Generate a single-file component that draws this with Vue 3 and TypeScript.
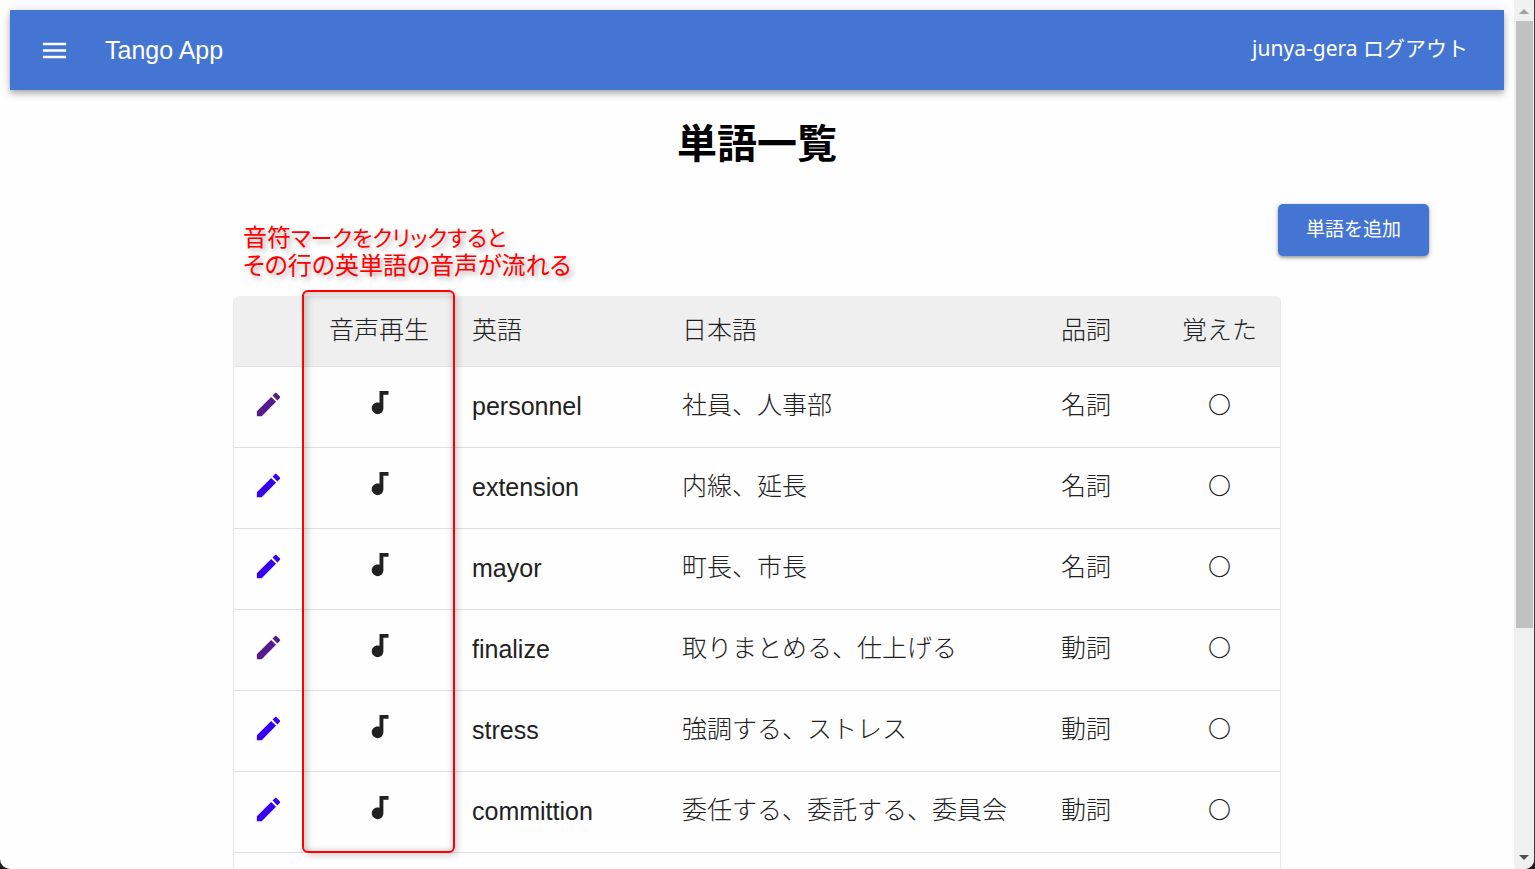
<script setup lang="ts">
interface Word {
  english: string
  japanese: string
  part: string
  learned: string
  visited: boolean
}

const words: Word[] = [
  { english: 'personnel', japanese: '社員、人事部', part: '名詞', learned: '〇', visited: true },
  { english: 'extension', japanese: '内線、延長', part: '名詞', learned: '〇', visited: false },
  { english: 'mayor', japanese: '町長、市長', part: '名詞', learned: '〇', visited: false },
  { english: 'finalize', japanese: '取りまとめる、仕上げる', part: '動詞', learned: '〇', visited: true },
  { english: 'stress', japanese: '強調する、ストレス', part: '動詞', learned: '〇', visited: false },
  { english: 'committion', japanese: '委任する、委託する、委員会', part: '動詞', learned: '〇', visited: false },
]
</script>

<template>
  <div class="window">
    <div class="page">
      <header class="app-bar">
        <button class="icon-button menu" type="button" aria-label="メニュー">
          <svg class="icon" viewBox="0 0 24 24"><path d="M3 18h18v-2H3v2zm0-5h18v-2H3v2zm0-7v2h18V6H3z" /></svg>
        </button>
        <span class="brand">Tango App</span>
        <a class="account" href="#logout">junya-gera ログアウト</a>
      </header>

      <main>
        <h1>単語一覧</h1>
        <div class="actions">
          <button class="add" type="button">単語を追加</button>
        </div>

        <div class="table-area">
          <p class="note">音符<span class="kana">マークをクリックすると</span><br />その行の英単語の音声が流れる</p>
          <table>
            <colgroup>
              <col class="c-edit" />
              <col class="c-sound" />
              <col class="c-english" />
              <col class="c-japanese" />
              <col class="c-part" />
              <col class="c-learned" />
            </colgroup>
            <thead>
              <tr>
                <th></th>
                <th class="center">音声再生</th>
                <th>英語</th>
                <th>日本語</th>
                <th>品詞</th>
                <th class="center">覚えた</th>
              </tr>
            </thead>
            <tbody>
              <tr v-for="word in words" :key="word.english">
                <td class="edit-cell">
                  <a class="icon-button edit" :class="{ visited: word.visited }" href="#edit" aria-label="編集">
                    <svg class="icon" viewBox="0 0 24 24"><path d="M3 17.25V21h3.75L17.81 9.94l-3.75-3.75L3 17.25zM20.71 7.04c.39-.39.39-1.02 0-1.41l-2.34-2.34c-.39-.39-1.02-.39-1.41 0l-1.83 1.83 3.75 3.75 1.83-1.83z" /></svg>
                  </a>
                </td>
                <td class="center sound-cell">
                  <button class="icon-button play" type="button" aria-label="再生">
                    <svg class="icon" viewBox="0 0 24 24"><path d="M12 3v9.28c-.47-.17-.97-.28-1.5-.28C8.01 12 6 14.01 6 16.5S8.01 21 10.5 21c2.31 0 4.2-1.75 4.45-4H15V6h4V3h-7z" /></svg>
                  </button>
                </td>
                <td class="english">{{ word.english }}</td>
                <td>{{ word.japanese }}</td>
                <td>{{ word.part }}</td>
                <td class="center learned">{{ word.learned }}</td>
              </tr>
              <tr><td colspan="6"></td></tr>
            </tbody>
          </table>
          <div class="highlight"></div>
        </div>
      </main>
    </div>

    <div class="scrollbar" aria-hidden="true">
      <svg class="arrow up" viewBox="0 0 10 5"><path d="M0 5L5 0l5 5z" /></svg>
      <div class="track"><div class="thumb"></div></div>
      <svg class="arrow" viewBox="0 0 10 5"><path d="M0 0h10L5 5z" /></svg>
    </div>
  </div>
</template>

<style>
body {
  margin: 0;
  background: #1a1a1a;
}
</style>

<style scoped>
.window {
  display: flex;
  box-sizing: border-box;
  height: 100vh;
  overflow: hidden;
  border-right: 1px solid #38383a;
  border-radius: 0 0 10px 10px;
  background: #fefefe;
  color: #212121;
  font-family: "Liberation Sans", "Noto Sans CJK JP", sans-serif;
}

.page {
  flex: 1;
  min-width: 0;
  padding: 10px;
}

.app-bar {
  display: flex;
  align-items: center;
  height: 80px;
  box-sizing: border-box;
  padding: 0 36px 0 29px;
  background: #4575d3;
  color: #fff;
  box-shadow: 0 2px 5px -1px rgba(0, 0, 0, 0.2), 0 5px 6px rgba(0, 0, 0, 0.14), 0 1px 12px rgba(0, 0, 0, 0.12);
}

.icon-button {
  display: inline-flex;
  padding: 0;
  border: 0;
  background: none;
  color: inherit;
  cursor: pointer;
}

.icon {
  display: block;
  width: 31px;
  height: 31px;
  fill: currentColor;
}

.brand {
  margin-left: 35px;
  font-size: 25px;
}

.account {
  margin-left: auto;
  padding-bottom: 6px;
  color: inherit;
  font-family: "Noto Sans", "Noto Sans CJK JP", sans-serif;
  font-size: 21px;
  text-decoration: none;
}

h1 {
  margin: 24px 0 0;
  color: #000;
  font-size: 40px;
  line-height: 60px;
  text-align: center;
}

.actions {
  display: flex;
  justify-content: flex-end;
  padding: 30px 75px 0 0;
}

.add {
  width: 151px;
  height: 52px;
  padding: 0 0 6px;
  border: 0;
  border-radius: 5px;
  background: #4575d3;
  color: #fff;
  font-family: "Noto Sans CJK JP", sans-serif;
  font-size: 19px;
  box-shadow: 0 2px 3px rgba(0, 0, 0, 0.3), 0 1px 6px rgba(0, 0, 0, 0.16);
}

.table-area {
  position: relative;
  max-width: 1048px;
  margin: 40px auto 0;
}

table {
  width: 100%;
  box-sizing: border-box;
  table-layout: fixed;
  border: 1px solid #e8e8e8;
  border-top: 0;
  border-radius: 6px;
  border-spacing: 0;
  overflow: hidden;
  font-size: 25px;
}

.c-edit { width: 72px; }
.c-sound { width: 146px; }
.c-english { width: 210px; }
.c-japanese { width: 379px; }
.c-part { width: 118px; }

th,
td {
  box-sizing: border-box;
  height: 81px;
  padding: 0 20px 8px;
  border-bottom: 1px solid #e0e0e0;
  font-family: "Noto Sans CJK JP", sans-serif;
  font-weight: 300;
  line-height: 36px;
  text-align: left;
  white-space: nowrap;
}

th {
  height: 71px;
  padding-bottom: 6px;
  background: #efefef;
}

td.english {
  padding-bottom: 2px;
  font-family: "Liberation Sans", Arial, sans-serif;
  font-weight: 400;
}

.center {
  padding-right: 0;
  padding-left: 0;
  text-align: center;
}

td.learned {
  font-size: 23px;
}

td.edit-cell {
  padding-bottom: 12px;
  padding-left: 19px;
}

td.sound-cell {
  padding-bottom: 16px;
}

.edit,
.play {
  vertical-align: middle;
}

.edit {
  color: #3700f0;
}

.edit.visited {
  color: #551a8b;
}

.note {
  position: absolute;
  bottom: 100%;
  left: 10px;
  margin: 0 0 19px;
  color: #f00;
  font-family: "Noto Sans CJK JP", sans-serif;
  font-size: 24px;
  font-feature-settings: "palt";
  line-height: 27px;
  white-space: nowrap;
  text-shadow: 3px 3px 5px rgba(0, 0, 0, 0.3);
}

.kana {
  font-size: 22px;
}

.highlight {
  position: absolute;
  top: -6px;
  left: 69px;
  box-sizing: border-box;
  width: 153px;
  height: 563px;
  border: 2px solid #f00;
  border-radius: 6px;
  box-shadow: 3px 3px 6px rgba(0, 0, 0, 0.16), inset 4px 4px 6px rgba(0, 0, 0, 0.16), inset -2px -2px 5px rgba(0, 0, 0, 0.12);
  pointer-events: none;
}

.scrollbar {
  display: flex;
  flex-direction: column;
  align-items: center;
  width: 20px;
  box-sizing: border-box;
  padding: 9px 0;
  background: #f0f0f0;
}

.arrow {
  width: 10px;
  height: 5px;
  fill: #505050;
}

.arrow.up {
  fill: #a0a0a0;
}

.track {
  display: grid;
  grid-template-rows: 607fr 220fr;
  flex: 1;
  align-self: stretch;
  margin: 7px 1px 7px 2px;
}

.thumb {
  background: #c1c1c1;
}
</style>
